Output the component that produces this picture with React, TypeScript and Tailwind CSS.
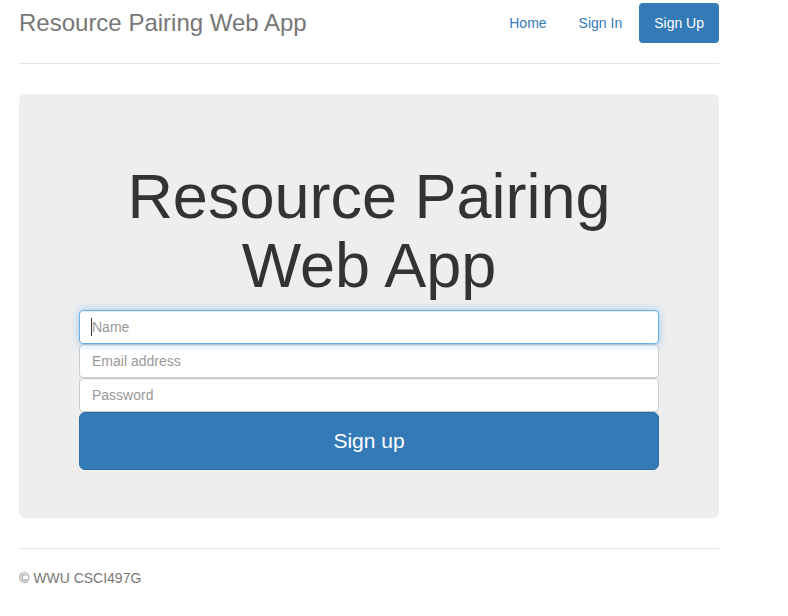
export default function App() {
  return (
    <div className="min-h-screen bg-white font-['Liberation_Sans',Arial,sans-serif] text-[14px] leading-[20px] text-[#333]">
      <div className="ml-[19px] w-[700px] pt-[3px]">
        {/* Header */}
        <div className="flex items-center justify-between border-b border-[#e5e5e5] pb-[20px]">
          <h3 className="text-[24px] leading-[40px] text-[#777]">Resource Pairing Web App</h3>
          <nav className="flex gap-[2px]">
            <a className="rounded-[4px] px-[15px] py-[10px] text-[#337ab7]" href="#">
              Home
            </a>
            <a className="rounded-[4px] px-[15px] py-[10px] text-[#337ab7]" href="#">
              Sign In
            </a>
            <a className="rounded-[4px] bg-[#337ab7] px-[15px] py-[10px] text-white" href="#">
              Sign Up
            </a>
          </nav>
        </div>

        {/* Jumbotron */}
        <div className="mt-[30px] rounded-[6px] bg-[#eee] px-[60px] py-[48px] text-center">
          <h1 className="mt-[20px] mb-[10px] text-[63px] leading-[69px]">Resource Pairing Web App</h1>
          <form className="flex flex-col text-left">
            <div className="relative">
              <input
                type="text"
                placeholder="Name"
                className="block h-[34px] w-full rounded-[4px] border border-[#66afe9] bg-white px-[12px] py-[6px] text-[14px] outline-none placeholder:text-[#999] shadow-[inset_0_1px_1px_rgba(0,0,0,0.075),0_0_8px_rgba(102,175,233,0.6)]"
              />
              <span className="absolute top-[8px] left-[12px] h-[18px] w-px bg-[#333]" />
            </div>
            <input
              type="email"
              placeholder="Email address"
              className="block h-[34px] w-full rounded-[4px] border border-[#ccc] bg-white px-[12px] py-[6px] text-[14px] outline-none placeholder:text-[#999] shadow-[inset_0_1px_1px_rgba(0,0,0,0.075)]"
            />
            <input
              type="password"
              placeholder="Password"
              className="block h-[34px] w-full rounded-[4px] border border-[#ccc] bg-white px-[12px] py-[6px] text-[14px] outline-none placeholder:text-[#999] shadow-[inset_0_1px_1px_rgba(0,0,0,0.075)]"
            />
            <button
              type="button"
              className="block w-full rounded-[6px] border border-[#2e6da4] bg-[#337ab7] px-[24px] py-[14px] text-center text-[21px] leading-[28px] text-white"
            >
              Sign up
            </button>
          </form>
        </div>

        {/* Footer */}
        <footer className="mt-[30px] border-t border-[#e5e5e5] pt-[19px] text-[#777]">
          <p>© WWU CSCI497G</p>
        </footer>
      </div>
    </div>
  );
}
